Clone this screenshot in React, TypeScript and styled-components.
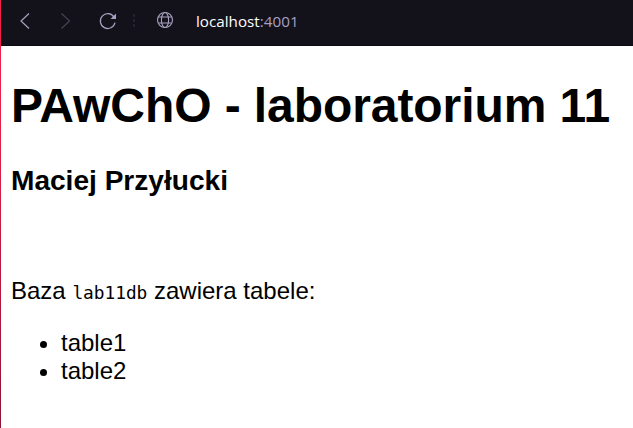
import React from "react";
import styled, { createGlobalStyle } from "styled-components";

const GlobalStyle = createGlobalStyle`
  html, body { margin: 0; padding: 0; background: #fff; }
  body { overflow: hidden; }
`;

const Window = styled.div`
  box-sizing: border-box;
  height: 428px;
  border-left: 1px solid;
  border-image: linear-gradient(#f51f4a, #e92049 25%, #8e1437) 1;
`;

const Toolbar = styled.header`
  box-sizing: border-box;
  height: 46px;
  background: #13111a;
  border-bottom: 1px solid #0b0911;
`;

const Controls = styled.svg`
  display: block;
  flex: none;
`;

const AddressRow = styled.div`
  display: flex;
  height: 45px;
`;

const Address = styled.div`
  padding-left: 15px;
  font: 15.2px/20px "Open Sans", sans-serif;
  letter-spacing: 0.02px;
  padding-top: 11px;
  color: #fff;
`;

const Port = styled.span`
  color: #a8a0c4;
`;

const Page = styled.main`
  display: flow-root;
  padding: 0 10px;
  font-family: "Liberation Sans", Arial, sans-serif;
  font-size: 24px;
  line-height: 28px;
  color: #000;
`;

const Title = styled.h1`
  margin: 32px 0 0;
  font-size: 48px;
  line-height: 55px;
  letter-spacing: -0.08px;
  white-space: nowrap;
`;

const Author = styled.h3`
  margin: 32px 0 0;
  font-size: 28.08px;
  line-height: 32px;
`;

const Intro = styled.p`
  margin: 80px 0 0;
`;

const Code = styled.code`
  font: 17.8px/20px "DejaVu Sans Mono", monospace;
`;

const Tables = styled.ul`
  margin: 24px 0 0;
  padding-left: 50px;
`;

export default function App() {
  return (
    <>
      <GlobalStyle />
      <Window>
        <Toolbar>
          <AddressRow>
            <Controls width="180" height="45" fill="none" stroke="#a8a0bf" strokeWidth="1.2">
              <path d="M28 13.5 20 21l8 7.5" />
              <path d="m60.5 13.5 8 7.5-8 7.5" stroke="#46434f" />
              <path d="M113 17.1a7.4 7.4 0 1 0 1 5.5" strokeWidth="1.25" />
              <path d="M115 13.5v5.5h-5.5z" fill="#a8a0bf" stroke="none" />
              <path d="M133 14v3m0 2v3m0 2v3" stroke="#242230" strokeWidth="2" />
              <g strokeWidth="1.1">
                <circle cx="164" cy="20" r="7.5" />
                <ellipse cx="164" cy="20" rx="3.6" ry="7.5" />
                <path d="M157.3 17h13.4m-13.4 6h13.4" />
              </g>
            </Controls>
            <Address>localhost<Port>:4001</Port></Address>
          </AddressRow>
        </Toolbar>
        <Page>
          <Title>PAwChO - laboratorium 11</Title>
          <Author>Maciej Przyłucki</Author>
          <Intro>Baza <Code>lab11db</Code> zawiera tabele:</Intro>
          <Tables>
            <li>table1</li>
            <li>table2</li>
          </Tables>
        </Page>
      </Window>
    </>
  );
}
